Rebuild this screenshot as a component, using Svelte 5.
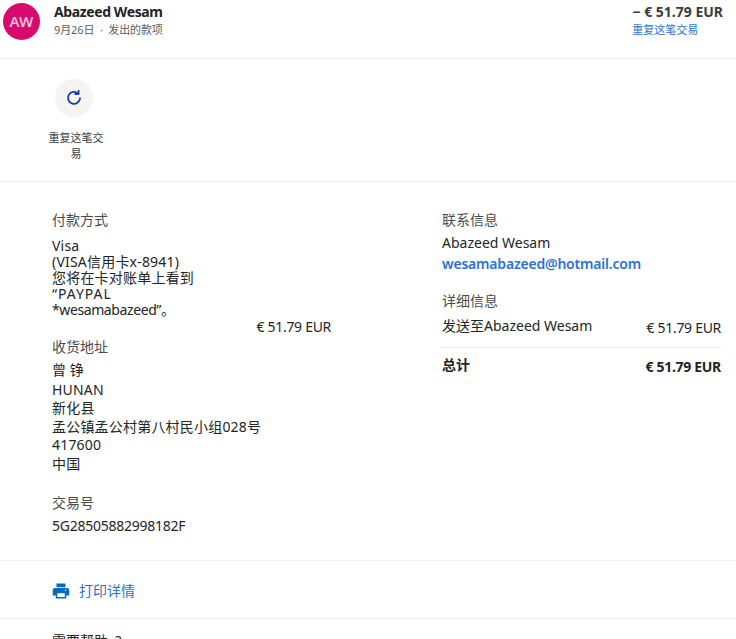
<script>
	const amount = '€ 51.79 EUR';
</script>

<div class="page">
	<header class="summary">
		<div class="avatar">AW</div>
		<div class="who">
			<div class="name">Abazeed Wesam</div>
			<div class="meta">9月26日&nbsp; · &nbsp;发出的款项</div>
		</div>
		<div class="total">
			<div class="sum">− {amount}</div>
			<a class="link small" href="#repeat">重复这笔交易</a>
		</div>
	</header>

	<section class="actions">
		<div class="action">
			<div class="circle">
				<svg width="18" height="18" viewBox="0 0 18 18" fill="none" stroke="#1f3aa8" stroke-width="1.8" stroke-linecap="round" stroke-linejoin="round">
					<path d="M13.2 4.6 A6 6 0 1 0 15 9.2" />
					<path d="M13.6 1.6 V5 H10.2" />
				</svg>
			</div>
			<div class="action-label">重复这笔交易</div>
		</div>
	</section>

	<section class="details">
		<div class="col left">
			<h3>付款方式</h3>
			<div class="pay">
				<div class="pay-text">Visa<br />(VISA信用卡x-8941)<br />您将在卡对账单上看到<br /><span class="wide">“PAYPAL</span><br /><span class="tight">*wesamabazeed”。</span></div>
				<div class="amt pay-amount">{amount}</div>
			</div>
			<h3>收货地址</h3>
			<div class="receiver">曾 铮</div>
			<div class="address">HUNAN<br />新化县<br />孟公镇孟公村第八村民小组028号<br />417600<br />中国</div>
			<h3 class="tx-title">交易号</h3>
			<div class="tx">5G28505882998182F</div>
		</div>
		<div class="col right">
			<h3>联系信息</h3>
			<div class="contact">Abazeed Wesam</div>
			<a class="link email" href="#mail">wesamabazeed@hotmail.com</a>
			<h3 class="info-title">详细信息</h3>
			<div class="line">
				<span>发送至Abazeed Wesam</span>
				<span class="amt">{amount}</span>
			</div>
			<div class="line grand">
				<span>总计</span>
				<span class="amt">{amount}</span>
			</div>
		</div>
	</section>

	<section class="print">
		<svg width="18" height="18" viewBox="0 0 24 24" fill="#0a6ab8">
			<path d="M6 2h12v5H6zM4 8h16a3 3 0 0 1 3 3v7h-4v4H5v-4H1v-7a3 3 0 0 1 3-3zm3 7v5h10v-5zm11-5a1 1 0 1 0 0 2 1 1 0 0 0 0-2z" fill-rule="evenodd" />
		</svg>
		<a class="link" href="#print">打印详情</a>
	</section>

	<section class="help">需要帮助&nbsp;&nbsp;?</section>
</div>

<style>
	:global(body) {
		background: #fff;
		overflow: hidden;
	}

	.page {
		height: 639px;
		overflow: hidden;
		font-family: "Noto Sans", "Noto Sans CJK SC", sans-serif;
		font-size: 14px;
		line-height: 18px;
		color: #232526;
	}

	.link {
		color: #2b72d2;
		text-decoration: none;
	}

	.summary {
		display: flex;
		height: 59px;
		padding: 2px 13px 0 3px;
		box-sizing: border-box;
		border-bottom: 1px solid #eeeeee;
	}

	.avatar {
		width: 37px;
		height: 37px;
		margin-top: 1px;
		border-radius: 50%;
		background: #d80a6e;
		color: #f7c4dc;
		font-size: 15px;
		font-weight: 600;
		line-height: 37px;
		text-align: center;
	}

	.who {
		margin-left: 14px;
		flex: 1;
	}

	.name {
		font-size: 14px;
		font-weight: 700;
		line-height: 20px;
		letter-spacing: -0.4px;
	}

	.meta {
		font-size: 11px;
		line-height: 16px;
		color: #5a5d60;
		letter-spacing: -0.1px;
	}

	.sum {
		font-weight: 700;
		font-size: 14px;
		line-height: 20px;
		color: #3a3c3e;
	}

	.small {
		font-size: 11px;
		line-height: 16px;
		display: block;
	}

	.actions {
		height: 123px;
		padding: 20px 0 0 48px;
		box-sizing: border-box;
		border-bottom: 1px solid #eeeeee;
	}

	.action {
		width: 56px;
	}

	.circle {
		width: 38px;
		height: 38px;
		margin-left: 7px;
		border-radius: 50%;
		background: #f5f4f0;
		display: flex;
		align-items: center;
		justify-content: center;
	}

	.action-label {
		margin-top: 13px;
		font-size: 11px;
		line-height: 16px;
		text-align: center;
		color: #3a3c3e;
	}

	.details {
		display: flex;
		height: 379px;
		padding: 29px 15px 0 52px;
		box-sizing: border-box;
		border-bottom: 1px solid #eeeeee;
	}

	h3 {
		margin: 0;
		font-size: 14px;
		font-weight: 400;
		line-height: 18px;
		color: #4a4c4e;
	}

	.left {
		width: 279px;
		margin-right: 111px;
	}

	.right {
		flex: 1;
	}

	.amt {
		letter-spacing: -0.3px;
	}

	.pay {
		margin-top: 9px;
		line-height: 16px;
	}

	.pay-text {
		width: 170px;
		letter-spacing: 0.2px;
	}

	.wide {
		letter-spacing: 1px;
	}

	.tight {
		letter-spacing: -0.4px;
	}

	.pay-amount {
		text-align: right;
		line-height: 18px;
		margin-bottom: 2px;
	}

	.receiver {
		margin-top: 5px;
	}

	.address {
		margin-top: 2px;
		line-height: 18.4px;
		letter-spacing: 0.2px;
	}

	.tx-title {
		margin-top: 21px;
	}

	.tx {
		margin-top: 5px;
		letter-spacing: -0.25px;
	}

	.contact {
		margin-top: 5px;
	}

	.email {
		display: block;
		margin-top: 3px;
		font-weight: 600;
		letter-spacing: -0.2px;
	}

	.info-title {
		margin-top: 19px;
	}

	.line {
		display: flex;
		justify-content: space-between;
		margin-top: 7px;
		padding-bottom: 10px;
	}

	.line .amt {
		padding-top: 2px;
	}

	.grand {
		margin-top: 0;
		padding-top: 8px;
		border-top: 1px solid #eeeeee;
		font-weight: 700;
	}

	.print {
		display: flex;
		align-items: center;
		gap: 9px;
		height: 58px;
		padding: 2px 0 0 52px;
		box-sizing: border-box;
		border-bottom: 1px solid #eeeeee;
	}

	.help {
		padding: 13px 0 0 52px;
	}
</style>
